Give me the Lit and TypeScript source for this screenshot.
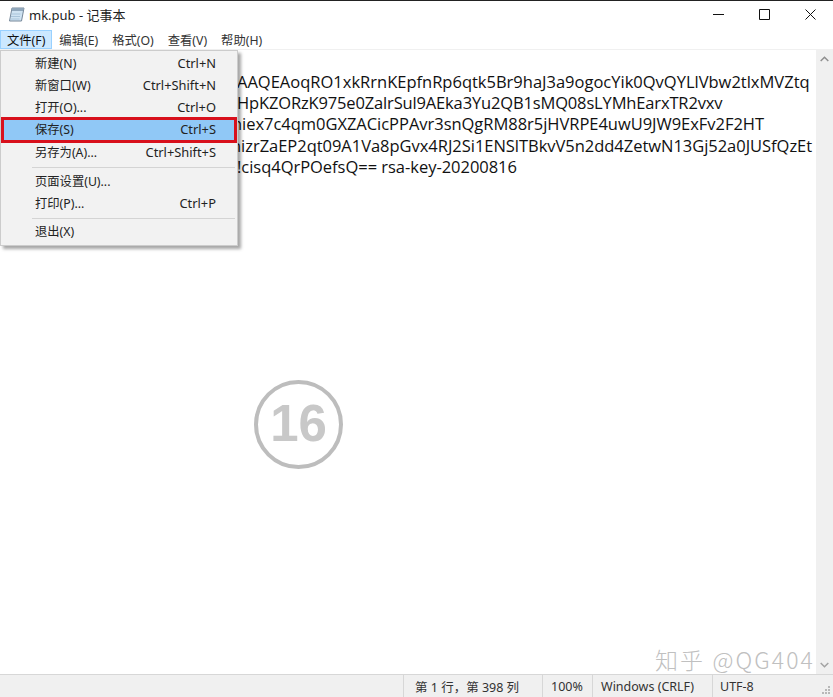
import { LitElement, html, css } from 'lit';
import { customElement } from 'lit/decorators.js';

const MENUS = ['文件(F)', '编辑(E)', '格式(O)', '查看(V)', '帮助(H)'];

// only what shows past the open menu; x and spacing line each row up with the reference
const LINES = [
  { x: 237, spacing: 0, text: 'AAQEAoqRO1xkRrnKEpfnRp6qtk5Br9haJ3a9ogocYik0QvQYLlVbw2tlxMVZtq' },
  { x: 237, spacing: -0.15, text: 'HpKZORzK975e0ZalrSul9AEka3Yu2QB1sMQ08sLYMhEarxTR2vxv' },
  { x: 232, spacing: -0.03, text: 'hiex7c4qm0GXZACicPPAvr3snQgRM88r5jHVRPE4uwU9JW9ExFv2F2HT' },
  { x: 231, spacing: -0.03, text: 'nizrZaEP2qt09A1Va8pGvx4RJ2Si1ENSlTBkvV5n2dd4ZetwN13Gj52a0JUSfQzEt' },
  { x: 237, spacing: -0.03, text: '!cisq4QrPOefsQ== rsa-key-20200816' },
];

type Item = { label: string; key?: string; active?: boolean } | 'sep';

const ITEMS: Item[] = [
  { label: '新建(N)', key: 'Ctrl+N' },
  { label: '新窗口(W)', key: 'Ctrl+Shift+N' },
  { label: '打开(O)...', key: 'Ctrl+O' },
  { label: '保存(S)', key: 'Ctrl+S', active: true },
  { label: '另存为(A)...', key: 'Ctrl+Shift+S' },
  'sep',
  { label: '页面设置(U)...' },
  { label: '打印(P)...', key: 'Ctrl+P' },
  'sep',
  { label: '退出(X)' },
];

@customElement('app-root')
export class AppRoot extends LitElement {
  static styles = css`
    :host {
      display: flex;
      flex-direction: column;
      position: relative;
      width: 833px;
      height: 697px;
      overflow: hidden;
      background: #fff;
      color: #1a1a1a;
      font-family: 'Noto Sans', 'Noto Sans CJK SC', sans-serif;
      font-size: 12.5px;
    }

    .titlebar {
      display: flex;
      align-items: center;
      height: 29px;
      flex: none;
      border-top: 1px solid #222;
      padding-left: 8px;
      font-size: 13px;
      color: #222;
      box-sizing: border-box;
    }
    .titlebar .icon { margin-top: -2px; }
    .titlebar .name { flex: 1; margin-left: 4px; margin-top: -2px; }
    .win {
      display: flex;
      align-items: center;
      justify-content: center;
      width: 46px;
      height: 28px;
      margin-top: -2px;
    }
    .win svg { display: block; }

    .menubar {
      display: flex;
      height: 21px;
      flex: none;
      align-items: stretch;
      border-bottom: 1px solid #f0f0f0;
      box-sizing: border-box;
      padding-top: 1px;
      font-size: 12.3px;
    }
    .menubar span {
      display: flex;
      align-items: center;
      padding: 0 7px;
      color: #333;
    }
    .menubar span.open {
      background: #cce8ff;
      box-shadow: inset 0 0 0 1px #99d1ff;
      color: #111;
    }

    .body {
      display: flex;
      flex: 1;
      min-height: 0;
    }
    .editor {
      flex: 1;
      min-width: 0;
      padding-top: 21px;
      overflow: hidden;
      font-family: 'Open Sans', 'Noto Sans', sans-serif;
      font-size: 16.5px;
      line-height: 21.2px;
      color: #111;
    }
    .line { white-space: nowrap; }

    .scrollbar {
      flex: none;
      width: 17px;
      background: #f0f0f0;
      display: flex;
      flex-direction: column;
      justify-content: space-between;
      align-items: center;
      padding: 6px 0;
    }

    .status {
      display: flex;
      flex: none;
      height: 22px;
      align-items: center;
      background: #f0f0f0;
      border-top: 1px solid #d7d7d7;
      color: #333;
      padding-left: 403px;
    }
    .status span {
      height: 100%;
      display: flex;
      align-items: center;
      border-left: 1px solid #d7d7d7;
      padding-left: 8px;
      box-sizing: border-box;
    }
    .status .pos { width: 139px; padding-left: 11px; }
    .status .zoom { width: 50px; }
    .status .eol { width: 120px; }
    .status .enc { width: 100px; padding-left: 7px; }

    .menu {
      position: absolute;
      left: 0;
      top: 50px;
      width: 238px;
      box-sizing: border-box;
      height: 196px;
      padding: 2px 1px 1px;
      background: #f2f2f2;
      border: 1px solid #ccc;
      box-shadow: 3px 3px 3px rgba(0, 0, 0, 0.35);
      color: #222;
    }
    .item {
      display: flex;
      justify-content: space-between;
      align-items: center;
      height: 22px;
      padding: 0 20px 2px 33px;
      box-sizing: border-box;
      font-size: 12.3px;
    }
    .item .key { font-size: 12.85px; }
    .item.active {
      height: 26px;
      margin: -2px -1px -2px;
      background: #90c8f6;
      border: 3px solid #d8101c;
      padding: 0 18px 2px 31px;
    }
    .item.active + .item { margin-top: 1px; }
    .sep {
      height: 1px;
      background: #d4d4d4;
      margin: 3px 1px 3px 30px;
    }
    .sep + .item + .item + .sep { margin-bottom: 2px; }

    .stamp {
      position: absolute;
      left: 254px;
      top: 380px;
      width: 89px;
      height: 89px;
      box-sizing: border-box;
      border: 4px solid #bdbdbd;
      border-radius: 50%;
      display: flex;
      align-items: center;
      justify-content: center;
      padding-bottom: 3px;
      font-family: 'Liberation Sans', sans-serif;
      font-weight: 700;
      font-size: 51px;
      color: #c8c8c8;
    }

    .mark {
      position: absolute;
      left: 655px;
      top: 643px;
      font-family: 'Noto Sans CJK SC', 'Noto Sans', sans-serif;
      font-weight: 300;
      font-size: 23px;
      line-height: 32px;
      letter-spacing: 2.1px;
      color: #c0c0c0;
      white-space: nowrap;
    }

    .grip {
      position: absolute;
      right: 2px;
      bottom: 2px;
    }
  `;

  render() {
    return html`
      <div class="titlebar">
        <svg class="icon" width="17" height="16" viewBox="0 0 17 16">
          <path d="M4 2h12l-2.5 13H1.5z" fill="#cfe3f2" stroke="#76889a" stroke-linejoin="round" />
          <path d="M4.4 2h11.2l-.6 3H3.8z" fill="#8fa6ba" />
          <path d="M3.4 8h9M3 10.5h9M2.6 13h9" stroke="#a9c4d9" />
        </svg>
        <div class="name">mk.pub - 记事本</div>
        <div class="win">
          <svg width="11" height="11" viewBox="0 0 11 11"><path d="M0 5.5h11" stroke="#111" /></svg>
        </div>
        <div class="win">
          <svg width="11" height="11" viewBox="0 0 11 11"><path d="M.5.5h10v10H.5z" fill="none" stroke="#111" /></svg>
        </div>
        <div class="win">
          <svg width="11" height="11" viewBox="0 0 11 11"><path d="M.5.5l10 10M10.5.5l-10 10" stroke="#111" /></svg>
        </div>
      </div>

      <div class="menubar">
        ${MENUS.map((m, i) => html`<span class=${i === 0 ? 'open' : ''}>${m}</span>`)}
      </div>

      <div class="body">
        <div class="editor">
          ${LINES.map(
            (l) => html`<div class="line" style="margin-left:${l.x}px;letter-spacing:${l.spacing}px">${l.text}</div>`
          )}
        </div>
        <div class="scrollbar">
          <svg width="9" height="6" viewBox="0 0 9 6"><path d="M.7 5l3.8-3.8L8.3 5" fill="none" stroke="#8f8f8f" stroke-width="1.5" /></svg>
          <svg width="9" height="6" viewBox="0 0 9 6"><path d="M.7 1l3.8 3.8L8.3 1" fill="none" stroke="#a3a3a3" stroke-width="1.5" /></svg>
        </div>
      </div>

      <div class="status">
        <span class="pos">第 1 行，第 398 列</span>
        <span class="zoom">100%</span>
        <span class="eol">Windows (CRLF)</span>
        <span class="enc">UTF-8</span>
      </div>

      <div class="menu">
        ${ITEMS.map((it) =>
          it === 'sep'
            ? html`<div class="sep"></div>`
            : html`<div class="item ${it.active ? 'active' : ''}"><span>${it.label}</span><span class="key">${it.key ?? ''}</span></div>`
        )}
      </div>

      <div class="stamp">16</div>
      <div class="mark">知乎 @QG404</div>

      <svg class="grip" width="10" height="10" viewBox="0 0 10 10" fill="#b8b8b8">
        <rect x="7" y="1" width="2" height="2" />
        <rect x="4" y="4" width="2" height="2" />
        <rect x="7" y="4" width="2" height="2" />
        <rect x="1" y="7" width="2" height="2" />
        <rect x="4" y="7" width="2" height="2" />
        <rect x="7" y="7" width="2" height="2" />
      </svg>
    `;
  }
}
